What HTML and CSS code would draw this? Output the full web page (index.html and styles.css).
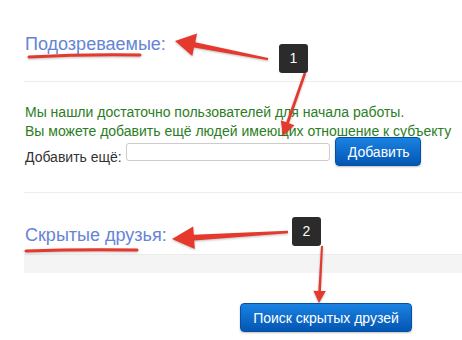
FILE: index.html
```html
<!DOCTYPE html>
<html lang="ru">
<head>
    <meta charset="UTF-8">
    <title>Скрытые друзья</title>
    <link rel="stylesheet" href="styles.css">
</head>
<body>
<div class="page">
    <h2 class="title title-first">Подозреваемые:</h2>
    <div class="divider"></div>
    <p class="note">Мы нашли достаточно пользователей для начала работы.<br>
        Вы можете добавить ещё людей имеющих отношение к субъекту</p>
    <form class="add-row">
        <label class="add-label" for="more">Добавить ещё:</label>
        <input class="add-input" type="text" id="more">
        <button class="btn" type="button">Добавить</button>
    </form>
    <div class="divider divider-second"></div>
    <h2 class="title title-second">Скрытые друзья:</h2>
    <div class="gray-bar"></div>
    <div class="search-row">
        <button class="btn btn-search" type="button">Поиск скрытых друзей</button>
    </div>

    <!-- пометки поверх скриншота -->
    <svg class="marks" width="462" height="340" viewBox="0 0 462 340">
        <g fill="#e5392d" stroke="none">
            <polygon points="175,41 197,33.5 195.3,42.3 268.2,58 267.8,60.2 194,47.4 192.3,56"/>
            <polygon points="283,136 294.4,125.3 289,123.3 306.2,73.4 303.8,72.6 286.2,122.3 280.8,120.3"/>
            <polygon points="172,239 193.2,226.5 193.8,234.8 287.9,230.7 288.1,233.3 194.2,240.6 194.8,249"/>
            <polygon points="319,303 325.8,291 320.9,291.1 323,246 321,246 318.3,290.9 313.4,290.8"/>
        </g>
        <g fill="none" stroke="#e5392d" stroke-width="3" stroke-linecap="round">
            <path d="M29 57 Q 85 54 140 55"/>
            <path d="M26 251 Q 80 249 137 250"/>
        </g>
    </svg>
    <div class="badge badge-one">1</div>
    <div class="badge badge-two">2</div>
</div>
</body>
</html>
```

FILE: styles.css
```css
body {
    margin: 0;
    background: #fff;
    font-family: "Liberation Sans", Arial, sans-serif;
}
.page {
    position: relative;
    width: 462px;
    height: 340px;
    overflow: hidden;
    padding-left: 24px;
    box-sizing: border-box;
}
.title {
    margin: 0;
    font-size: 18px;
    font-weight: normal;
    line-height: 24px;
    color: #6584d6;
    padding-left: 1px;
}
.title-first {
    padding-top: 32px;
}
.divider {
    border-top: 1px solid #ececec;
    margin-top: 25px;
}
.divider-second {
    margin-top: 26px;
}
.note {
    margin: 21px 0 0 1px;
    font-size: 14px;
    line-height: 19px;
    color: #2b7d24;
}
.add-row {
    display: flex;
    align-items: flex-end;
    margin-top: -4px;
    padding-left: 1px;
}
.add-label {
    font-size: 14px;
    line-height: 18px;
    color: #333;
}
.add-input {
    width: 204px;
    height: 18px;
    box-sizing: border-box;
    margin: 0 5px 5px 4px;
    border: 1px solid #ccc;
    border-radius: 3px;
    padding: 0 4px;
}
.btn {
    height: 29px;
    padding: 0 12px;
    font-family: "Liberation Sans", Arial, sans-serif;
    font-size: 14px;
    color: #fff;
    border: 1px solid #0550a3;
    border-radius: 4px;
    background: linear-gradient(#1a82e2, #0356b3);
    box-shadow: 0 1px 2px rgba(0, 0, 0, 0.25);
    cursor: pointer;
}
.add-row .btn {
    width: 86px;
}
.title-second {
    margin-top: 30px;
}
.gray-bar {
    height: 18px;
    margin-top: 7px;
    background: #f4f4f4;
    border-top: 1px solid #ebebeb;
}
.search-row {
    margin-top: 30px;
    padding-left: 216px;
}
.btn-search {
    width: 172px;
}
.marks {
    position: absolute;
    left: 0;
    top: 0;
    filter: drop-shadow(0 1px 1px rgba(0, 0, 0, 0.25));
}
.badge {
    position: absolute;
    width: 29px;
    height: 29px;
    line-height: 29px;
    text-align: center;
    background: #2b2b2b;
    color: #fff;
    font-size: 14px;
    border-radius: 3px;
}
.badge-one {
    left: 279px;
    top: 44px;
}
.badge-two {
    left: 292px;
    top: 217px;
}
```
